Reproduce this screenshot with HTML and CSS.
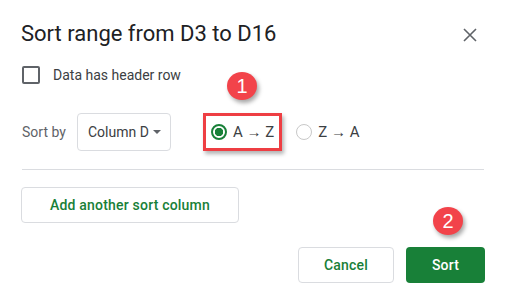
FILE: index.html
```html
<!DOCTYPE html>
<html>
<head>
<meta charset="utf-8">
<link rel="stylesheet" href="styles.css">
</head>
<body>
<div class="dialog">
  <div class="header">
    <h1 class="title">Sort range from D3 to D16</h1>
    <span class="close"><svg width="14" height="14" viewBox="0 0 14 14"><path d="M1 1L13 13M13 1L1 13" stroke="#5f6368" stroke-width="1.6" fill="none"/></svg></span>
  </div>
  <div class="check-row">
    <span class="checkbox"></span>
    <span class="check-label">Data has header row</span>
  </div>
  <div class="sort-row">
    <span class="sort-label">Sort by</span>
    <div class="select">
      <span class="select-text">Column D</span>
      <svg class="arrow" width="8" height="4" viewBox="0 0 8 4"><path d="M0 0H8L4 4Z" fill="#5f6368"/></svg>
    </div>
    <div class="highlight">
      <span class="radio checked"></span>
      <span class="radio-label">A → Z</span>
    </div>
    <div class="option">
      <span class="radio"></span>
      <span class="radio-label">Z → A</span>
    </div>
  </div>
  <div class="divider"></div>
  <div class="add-row">
    <button class="btn add">Add another sort column</button>
  </div>
  <div class="footer">
    <button class="btn cancel">Cancel</button>
    <button class="btn primary">Sort</button>
  </div>
  <span class="badge badge-1">1</span>
  <span class="badge badge-2">2</span>
</div>
</body>
</html>
```
FILE: styles.css
```css
* { box-sizing: border-box; }
html, body { margin: 0; padding: 0; background: #fff; }
body { width: 505px; height: 303px; overflow: hidden; font-family: Roboto, "Liberation Sans", Arial, sans-serif; }
.dialog { position: relative; width: 505px; height: 303px; padding: 20px 21px 0 22px; }
.header { display: flex; align-items: center; justify-content: space-between; height: 28px; }
.title { margin: 0 0 0 -1px; font-size: 22px; line-height: 28px; font-weight: 400; color: #202124; }
.close { display: flex; width: 14px; height: 14px; margin-right: 7px; margin-top: 1px; }
.check-row { display: flex; align-items: center; gap: 13px; margin-top: 18px; height: 18px; }
.checkbox { width: 18px; height: 18px; border: 2px solid #5f6368; border-radius: 2px; }
.check-label { font-size: 14px; color: #3c4043; }
.sort-row { display: flex; align-items: center; margin-top: 29px; height: 38px; }
.sort-label { font-size: 14px; color: #5f6368; width: 55px; white-space: nowrap; }
.select { display: flex; align-items: center; justify-content: space-between; width: 94px; height: 38px; padding: 0 9px 0 10px; border: 1px solid #dadce0; border-radius: 4px; font-size: 14px; color: #3c4043; }
.select-text { white-space: nowrap; }
.arrow { display: block; flex: none; }
.highlight { display: flex; align-items: center; gap: 6px; margin-left: 32px; height: 38px; padding: 0 5px; border: 3px solid #ee3e43; box-shadow: 2px 3px 4px rgba(0,0,0,0.3); }
.option { display: flex; align-items: center; gap: 6px; margin-left: 14px; }
.radio { flex: none; width: 16px; height: 16px; border-radius: 50%; border: 1.5px solid #c8c8c8; }
.radio.checked { border: 2px solid #188038; background: radial-gradient(circle, #188038 0 4px, transparent 4.5px); }
.radio-label { font-size: 15px; color: #3c4043; white-space: nowrap; }
.divider { height: 1px; background: #dadce0; margin-top: 18px; }
.add-row { margin-top: 17px; margin-left: -1px; }
.btn { font-family: Roboto, "Liberation Sans", Arial, sans-serif; font-size: 14px; font-weight: 500; border-radius: 4px; height: 36px; cursor: pointer; letter-spacing: 0.2px; }
.add { width: 218px; background: #fff; border: 1px solid #dadce0; color: #188038; }
.footer { display: flex; justify-content: flex-end; gap: 12px; margin-top: 24px; margin-right: -1px; }
.cancel { width: 96px; background: #fff; border: 1px solid #dadce0; color: #188038; }
.primary { width: 79px; background: #188038; border: none; color: #fff; }
.badge { position: absolute; display: flex; align-items: center; justify-content: center; width: 30px; height: 28px; border-radius: 50%; background: #f2434a; color: #fff; font-size: 20px; font-family: "Liberation Sans", Arial, sans-serif; box-shadow: 2px 3px 4px rgba(0,0,0,0.35); }
.badge-1 { left: 227px; top: 72px; }
.badge-2 { left: 433px; top: 207px; }
```
